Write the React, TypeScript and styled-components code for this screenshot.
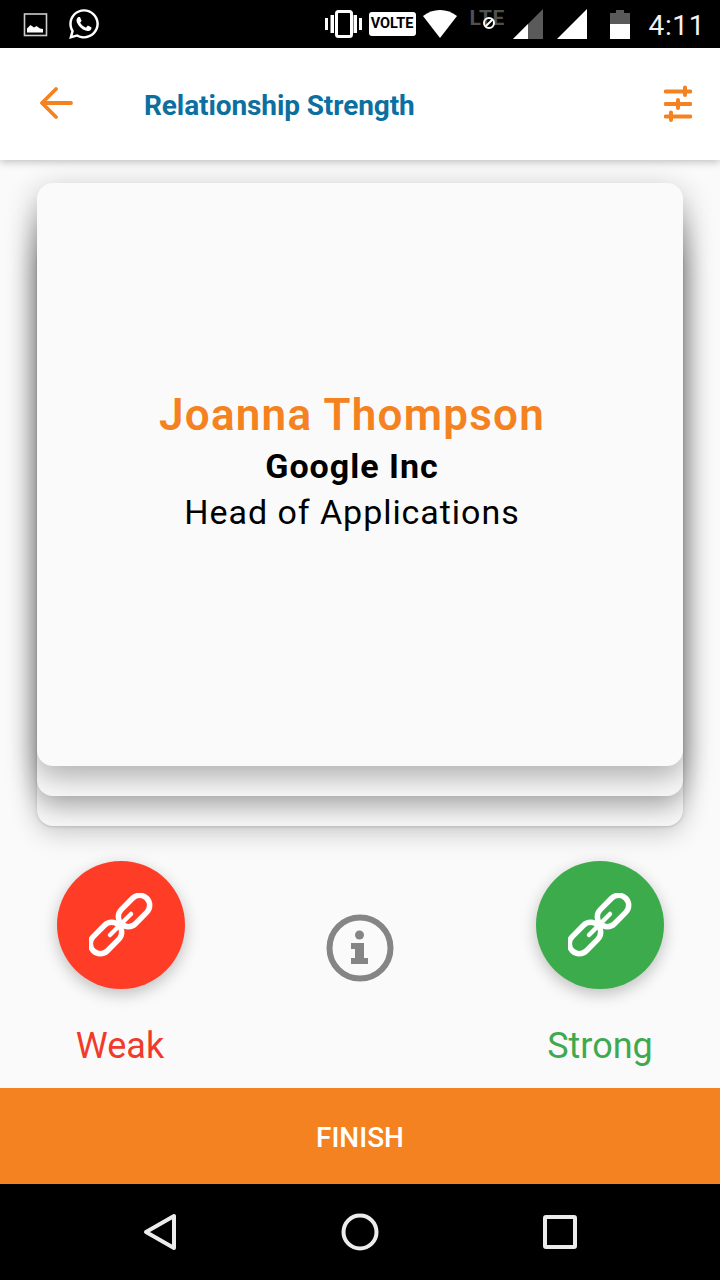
import React from "react";
import styled, { createGlobalStyle } from "styled-components";
import { FaWhatsapp } from "react-icons/fa";

const Global = createGlobalStyle`
  html, body { margin: 0; padding: 0; background: #000; }
  * { box-sizing: border-box; }
`;

const Screen = styled.div`
  width: 720px;
  height: 1280px;
  display: flex;
  flex-direction: column;
  overflow: hidden;
  background: #fafafa;
  font-family: Roboto, "Liberation Sans", sans-serif;
`;

const StatusBar = styled.div`
  height: 48px;
  flex: none;
  background: #000;
  display: flex;
  align-items: center;
  padding: 0 15px 0 23px;
  color: #fff;
`;

const StatusSlot = styled.div<{ $gap?: number; $push?: boolean }>`
  display: flex;
  align-items: center;
  margin-left: ${(p) => (p.$push ? "auto" : `${p.$gap ?? 0}px`)};
`;

const Volte = styled.div`
  width: 47px;
  height: 24px;
  border-radius: 3px;
  background: #fff;
  color: #000;
  font-size: 14.5px;
  font-weight: 700;
  line-height: 24px;
  text-align: center;
`;

const Lte = styled.div`
  position: relative;
  width: 35px;
  height: 30px;
  color: #505050;
  font-size: 21px;
  font-weight: 700;
  line-height: 20px;
  letter-spacing: 0.4px;
  margin-top: -2px;
`;

const LteBan = styled.svg`
  position: absolute;
  left: 12px;
  top: 8px;
`;

const Clock = styled.div`
  font-size: 28px;
  line-height: 32px;
  color: #f2f2f2;
  letter-spacing: 0.6px;
  margin-top: 3px;
`;

const Header = styled.header`
  height: 112px;
  flex: none;
  background: #fff;
  display: flex;
  align-items: center;
  padding: 0 28px 0 40px;
  box-shadow: 0 2px 8px rgba(0, 0, 0, 0.24);
  position: relative;
  z-index: 2;
`;

const Title = styled.h1`
  margin: 3px 0 0 70px;
  flex: 1;
  font-size: 28px;
  font-weight: 700;
  color: #0b70a0;
  letter-spacing: -0.1px;
`;

const Main = styled.main`
  flex: 1;
  display: flex;
  flex-direction: column;
  padding: 83px 37px 0;
`;

const CardLayer = styled.div<{ $outer?: boolean }>`
  display: flex;
  flex-direction: column;
  margin-top: ${(p) => (p.$outer ? "0" : "-30px")};
  background: #fafafa;
  border-radius: 16px;
  padding-bottom: 30px;
  box-shadow: ${(p) =>
    p.$outer
      ? "0 1px 3px rgba(0,0,0,0.14), 0 8px 26px rgba(0,0,0,0.18)"
      : "0 10px 28px rgba(0,0,0,0.34)"};
`;

const TopCard = styled.section`
  margin-top: -30px;
  height: 583px;
  background: #fafafa;
  border-radius: 16px;
  box-shadow: 0 10px 30px rgba(0, 0, 0, 0.32);
  display: flex;
  flex-direction: column;
  align-items: center;
  padding: 204px 16px 0 0;
`;

const Name = styled.div`
  font-size: 44px;
  line-height: 56px;
  font-weight: 600;
  color: #f58220;
  letter-spacing: 1.25px;
`;

const Company = styled.div`
  font-size: 34px;
  line-height: 46px;
  font-weight: 700;
  color: #000;
  letter-spacing: 1px;
`;

const Role = styled.div`
  font-size: 34px;
  line-height: 46px;
  font-weight: 400;
  color: #000;
  letter-spacing: 0.95px;
`;

const Actions = styled.div`
  display: flex;
  justify-content: space-between;
  margin: 35px 19px 0 20px;
`;

const Action = styled.div`
  width: 128px;
  display: flex;
  flex-direction: column;
  align-items: center;
`;

const Circle = styled.div<{ $color: string }>`
  width: 128px;
  height: 128px;
  border-radius: 50%;
  background: ${(p) => p.$color};
  box-shadow: 0 5px 16px rgba(0, 0, 0, 0.24);
  display: flex;
  align-items: center;
  justify-content: center;
`;

const ActionLabel = styled.div<{ $color: string; $nudge?: number }>`
  margin-top: 35px;
  margin-left: ${(p) => p.$nudge ?? 0}px;
  font-size: 36px;
  line-height: 44px;
  color: ${(p) => p.$color};
  white-space: nowrap;
`;

const InfoSlot = styled.div`
  margin: 53px 0 0 -1px;
  height: 68px;
`;

const Finish = styled.button`
  height: 96px;
  flex: none;
  border: 0;
  padding: 3px 0 0;
  background: #f58220;
  color: #fff;
  font-family: Roboto, sans-serif;
  font-size: 28px;
  font-weight: 500;
`;

const NavBar = styled.nav`
  height: 96px;
  flex: none;
  background: #000;
  display: grid;
  grid-template-columns: repeat(3, 1fr);
  padding: 0 60px;
  justify-items: center;
  align-items: center;
`;

const Icon = styled.svg`
  display: block;
  flex: none;
`;

const LinkGlyph = () => (
  <Icon width="64" height="64" viewBox="0 0 64 64" fill="none" stroke="#fff" strokeWidth="5.5">
    <rect x="27" y="8" width="36" height="20" rx="10" transform="rotate(-45 45 18)" />
    <rect x="-1" y="35" width="36" height="20" rx="10" transform="rotate(-45 17 45)" />
    <path d="M21 42 L42 21" strokeWidth="4.500" strokeLinecap="round" />
  </Icon>
);

export default function App() {
  return (
    <Screen>
      <Global />
      <StatusBar>
        <StatusSlot>
          <Icon width="25" height="25" viewBox="0 0 25 25">
            <rect x="1.500" y="2" width="22" height="21.500" fill="none" stroke="#ccc" strokeWidth="1.600" />
            <path d="M4 20.500v-4l3.500-3.500 3.500 2.500 2.500-1.500 3.500 2.500 3 0.500v3.500z" fill="#fff" />
          </Icon>
        </StatusSlot>
        <StatusSlot $gap={19}>
          <FaWhatsapp size={34} color="#fff" />
        </StatusSlot>
        <StatusSlot $push>
          <Icon width="37" height="28" viewBox="0 0 37 28" fill="#fff">
            <rect x="0" y="8" width="3" height="12" />
            <rect x="5.500" y="5" width="3.500" height="18" />
            <rect x="11.500" y="1.500" width="15" height="25" rx="2" fill="none" stroke="#fff" strokeWidth="3" />
            <rect x="28.500" y="5" width="3.500" height="18" />
            <rect x="34" y="8" width="3" height="12" />
          </Icon>
        </StatusSlot>
        <StatusSlot $gap={7}>
          <Volte>VOLTE</Volte>
        </StatusSlot>
        <StatusSlot $gap={7}>
          <Icon width="34" height="28" viewBox="0 0 34 28">
            <path d="M17 0C10.500 0 5 2.200 0 6l17 22L34 6C29 2.200 23.500 0 17 0z" fill="#fff" />
          </Icon>
        </StatusSlot>
        <StatusSlot $gap={13}>
          <Lte>
            LTE
            <LteBan width="14" height="14" viewBox="0 0 14 14" fill="none" stroke="#fff" strokeWidth="2">
              <circle cx="7" cy="7" r="5" />
              <path d="M3.500 10.500l7-7" />
            </LteBan>
          </Lte>
        </StatusSlot>
        <StatusSlot $gap={8}>
          <Icon width="30" height="30" viewBox="0 0 30 30">
            <path d="M30 0V30H0z" fill="#5a5a5a" />
            <path d="M15 15V30H0z" fill="#fff" />
          </Icon>
        </StatusSlot>
        <StatusSlot $gap={14}>
          <Icon width="30" height="30" viewBox="0 0 30 30">
            <path d="M30 0V30H0z" fill="#fff" />
          </Icon>
        </StatusSlot>
        <StatusSlot $gap={23}>
          <Icon width="20" height="29" viewBox="0 0 20 29">
            <path d="M6 0h8v3h6v11H0V3h6z" fill="#5a5a5a" />
            <rect y="14" width="20" height="15" fill="#fff" />
          </Icon>
        </StatusSlot>
        <StatusSlot $gap={19}>
          <Clock>4:11</Clock>
        </StatusSlot>
      </StatusBar>

      <Header>
        <Icon width="34" height="34" viewBox="0 0 34 34" fill="none" stroke="#f58220" strokeWidth="3.800" strokeLinecap="round" strokeLinejoin="round">
          <path d="M31 16H3M16 2L2 16l14 14" />
        </Icon>
        <Title>Relationship Strength</Title>
        <Icon width="28" height="38" viewBox="0 0 28 38" fill="none" stroke="#f58220" strokeLinecap="round">
          <path d="M1.500 6.500H26.500M1.500 19H26.500M1.500 31.500H26.500" strokeWidth="3.800" />
          <path d="M21 2.500V10M14 15V23M7 27.500V35" strokeWidth="4" />
        </Icon>
      </Header>

      <Main>
        <CardLayer $outer>
          <CardLayer>
            <TopCard>
              <Name>Joanna Thompson</Name>
              <Company>Google Inc</Company>
              <Role>Head of Applications</Role>
            </TopCard>
          </CardLayer>
        </CardLayer>

        <Actions>
          <Action>
            <Circle $color="#ff3d26">
              <LinkGlyph />
            </Circle>
            <ActionLabel $color="#f03a2a" $nudge={-2}>Weak</ActionLabel>
          </Action>
          <InfoSlot>
            <Icon width="68" height="68" viewBox="0 0 68 68">
              <circle cx="34" cy="34" r="30.500" fill="none" stroke="#858585" strokeWidth="6" />
              <circle cx="33.500" cy="21" r="4.500" fill="#858585" />
              <path d="M25 29h13v15h4v6H25v-6h4v-9h-4z" fill="#858585" />
            </Icon>
          </InfoSlot>
          <Action>
            <Circle $color="#3cab4c">
              <LinkGlyph />
            </Circle>
            <ActionLabel $color="#3fa94f">Strong</ActionLabel>
          </Action>
        </Actions>
      </Main>

      <Finish>FINISH</Finish>

      <NavBar>
        <Icon width="34" height="38" viewBox="0 0 34 38" fill="none" stroke="#ececec" strokeWidth="4" strokeLinejoin="round">
          <path d="M31 3V35L3 19z" />
        </Icon>
        <Icon width="38" height="38" viewBox="0 0 38 38" fill="none" stroke="#ececec" strokeWidth="4">
          <circle cx="19" cy="19" r="16.500" />
        </Icon>
        <Icon width="34" height="34" viewBox="0 0 34 34" fill="none" stroke="#ececec" strokeWidth="4" strokeLinejoin="round">
          <rect x="2" y="2" width="30" height="30" rx="1" />
        </Icon>
      </NavBar>
    </Screen>
  );
}
